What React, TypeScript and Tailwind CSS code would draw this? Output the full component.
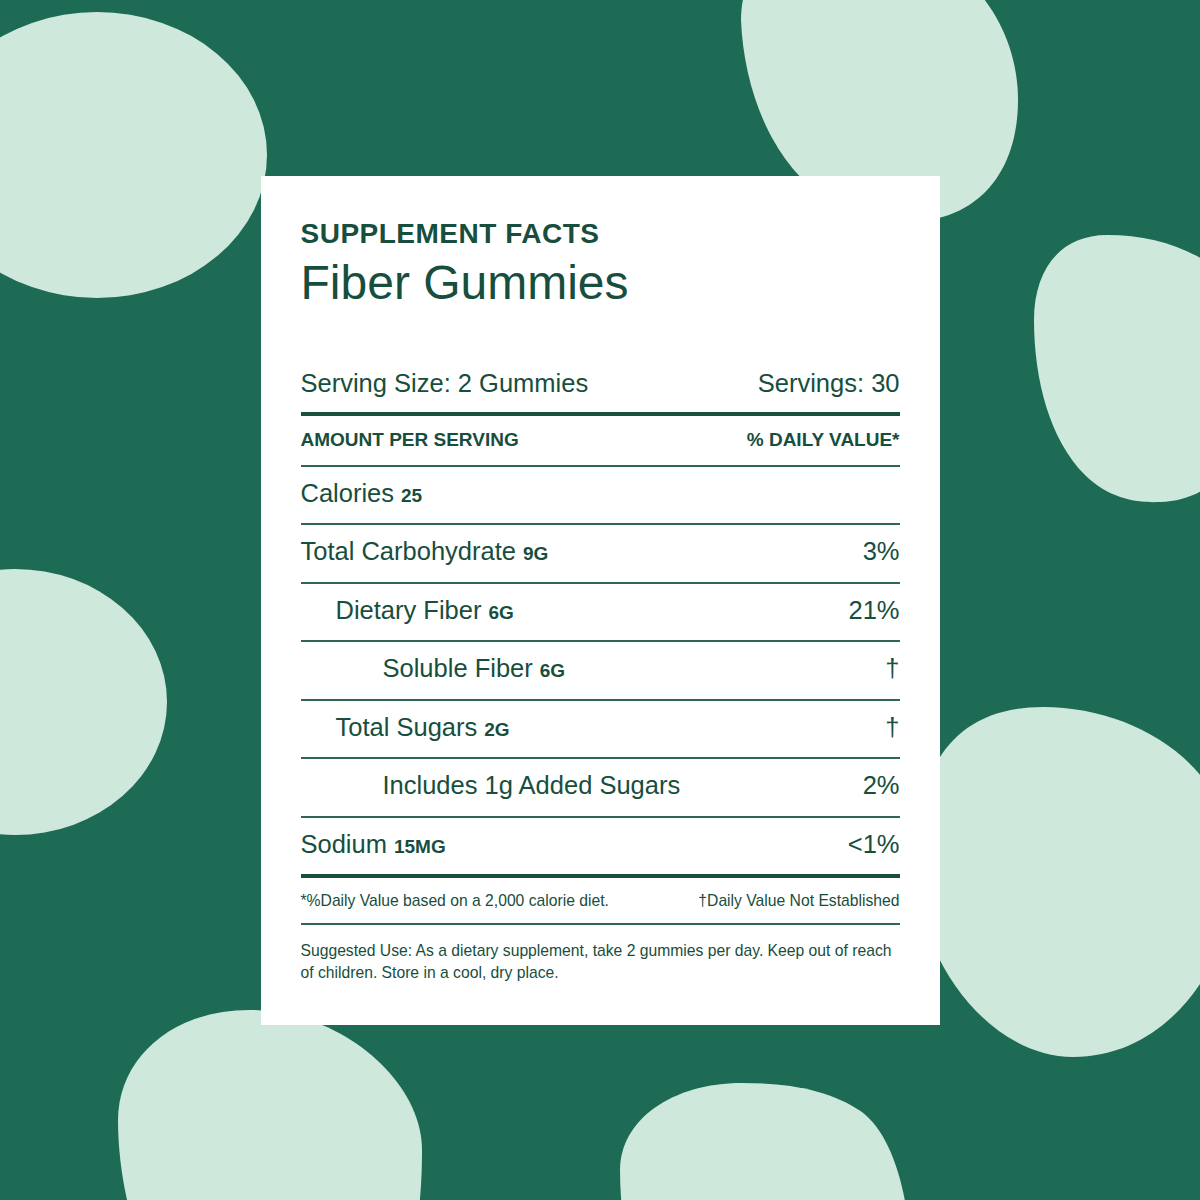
import React from "react";

const INK = "text-[#174e3d]";

type Row = {
  label: string;
  amount?: string;
  dv: string;
  indent: 0 | 1 | 2;
};

const rows: Row[] = [
  { label: "Calories", amount: "25", dv: "", indent: 0 },
  { label: "Total Carbohydrate", amount: "9G", dv: "3%", indent: 0 },
  { label: "Dietary Fiber", amount: "6G", dv: "21%", indent: 1 },
  { label: "Soluble Fiber", amount: "6G", dv: "†", indent: 2 },
  { label: "Total Sugars", amount: "2G", dv: "†", indent: 1 },
  { label: "Includes 1g Added Sugars", dv: "2%", indent: 2 },
  { label: "Sodium", amount: "15MG", dv: "<1%", indent: 0 },
];

const indentClass = ["pl-0", "pl-[35px]", "pl-[82px]"];

function Blobs() {
  return (
    <svg
      className="absolute inset-0 h-full w-full"
      viewBox="0 0 1200 1200"
      preserveAspectRatio="none"
    >
      <g fill="#cee8dc">
        {/* top left */}
        <ellipse cx="97" cy="155" rx="170" ry="143" />
        {/* top right */}
        <path d="M741 20 C745 120 800 222 905 222 C980 222 1018 170 1018 100 C1018 20 960 -60 860 -60 C760 -60 741 -20 741 20 Z" />
        {/* right middle */}
        <path d="M1107 235 C1060 235 1034 270 1034 320 C1034 380 1050 440 1085 475 C1110 500 1140 503 1160 502 C1230 500 1260 430 1260 360 C1260 280 1190 235 1107 235 Z" />
        {/* left middle */}
        <ellipse cx="15" cy="702" rx="152" ry="133" />
        {/* right bottom */}
        <path d="M1043 707 C945 707 915 780 915 860 C915 960 990 1057 1073 1057 C1170 1057 1235 960 1235 870 C1235 770 1140 707 1043 707 Z" />
        {/* bottom left */}
        <path d="M250 1010 C170 1010 118 1060 118 1120 C118 1170 130 1230 150 1260 L410 1260 C420 1220 422 1180 422 1150 C422 1080 340 1010 250 1010 Z" />
        {/* bottom middle */}
        <path d="M742 1083 C672 1083 620 1120 620 1170 C620 1200 624 1230 628 1260 L912 1260 C908 1190 892 1135 862 1112 C830 1090 790 1083 742 1083 Z" />
      </g>
    </svg>
  );
}

export default function App() {
  return (
    <div
      className="relative flex h-[1200px] w-[1200px] items-center justify-center overflow-hidden bg-[#1e6b55]"
      style={{ fontFamily: '"Liberation Sans", Arial, sans-serif' }}
    >
      <Blobs />

      <div className={`relative z-10 w-[679px] bg-white px-10 pt-10 pb-[41.5px] ${INK}`}>
        <div className="text-[28px] font-bold leading-[36px] tracking-[0.5px]">SUPPLEMENT FACTS</div>
        <div className="mt-[3px] text-[48px] leading-[56px]">Fiber Gummies</div>

        <div className="mt-[58px] flex h-[29px] justify-between text-[25.5px] leading-[29px]">
          <span>Serving Size: 2 Gummies</span>
          <span>Servings: 30</span>
        </div>
        <div className="mt-[14px] h-[4px] bg-[#184f3e]" />

        <div className="flex h-[49px] items-center justify-between text-[19px] font-bold leading-[22px]">
          <span>AMOUNT PER SERVING</span>
          <span>% DAILY VALUE*</span>
        </div>
        <div className="h-[2px] bg-[#2f6656]" />

        {rows.map((r, i) => (
          <div key={r.label}>
            <div
              className={`flex h-[56.5px] items-start justify-between pt-[12px] text-[25.5px] leading-[29px] ${indentClass[r.indent]}`}
            >
              <span className="h-[29px]">
                {r.label}
                {r.amount && (
                  <span className="ml-[7px] text-[19px] font-bold leading-none">{r.amount}</span>
                )}
              </span>
              <span className="h-[29px]">{r.dv}</span>
            </div>
            {i < rows.length - 1 ? (
              <div className="h-[2px] bg-[#2f6656]" />
            ) : (
              <div className="h-[4px] bg-[#184f3e]" />
            )}
          </div>
        ))}

        <div className="flex h-[45px] items-center justify-between text-[15.7px] leading-[18px]">
          <span>*%Daily Value based on a 2,000 calorie diet.</span>
          <span>†Daily Value Not Established</span>
        </div>
        <div className="h-[2px] bg-[#2f6656]" />

        <p className="mt-[15px] text-[15.7px] leading-[21.5px]">
          Suggested Use: As a dietary supplement, take 2 gummies per day. Keep out of reach of
          children. Store in a cool, dry place.
        </p>
      </div>
    </div>
  );
}
